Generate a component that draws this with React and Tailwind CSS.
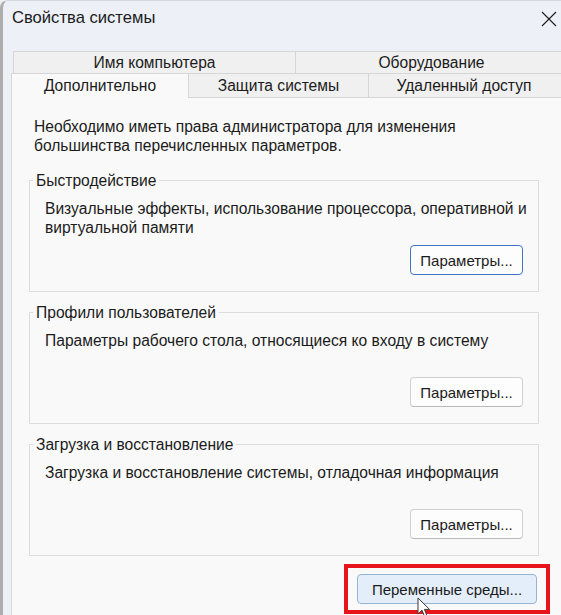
import React from "react";

const groups = [
  {
    title: "Быстродействие",
    text: "Визуальные эффекты, использование процессора, оперативной и виртуальной памяти",
    focused: true,
  },
  {
    title: "Профили пользователей",
    text: "Параметры рабочего стола, относящиеся ко входу в систему",
  },
  {
    title: "Загрузка и восстановление",
    text: "Загрузка и восстановление системы, отладочная информация",
  },
];

function WinButton({ children, focused, hovered, className = "" }) {
  let look = "border-[#d0d0d0] border-b-[#b9b9b9] bg-[#fdfdfd]";
  if (focused) look = "border-[#3a78c4] bg-[#fdfdfd]";
  if (hovered) look = "border-[#95b4d3] bg-[#e3eefa]";
  return (
    <button
      type="button"
      className={`h-[30px] rounded-[4px] border text-[15px] leading-none text-[#1b1b1b] ${look} ${className}`}
    >
      {children}
    </button>
  );
}

function Group({ title, text, focused, className = "" }) {
  return (
    <fieldset
      className={`w-[510px] border border-[#dcdcdc] px-[15px] pt-[9px] pb-[16px] ${className}`}
    >
      <legend className="-ml-[12px] px-[3px] leading-[19px]">{title}</legend>
      <p className="-mr-[10px] h-[38px] leading-[19px]">{text}</p>
      <div className="mt-[8px] flex justify-end">
        <WinButton focused={focused} className="w-[113px]">
          Параметры...
        </WinButton>
      </div>
    </fieldset>
  );
}

export default function App() {
  return (
    <div className="relative h-[615px] w-[561px] overflow-hidden bg-[#f0f0f0] font-['Liberation_Sans','Noto_Sans',sans-serif] text-[15.6px] text-[#1b1b1b]">
      <div className="flex h-full flex-col rounded-tl-[8px] border-t border-l-[3px] border-t-[#d5d9df] border-l-[#adadad] bg-[#edf1f7]">
        {/* заголовок окна */}
        <div className="flex h-[35px] shrink-0 items-center justify-between pl-[9px] pr-[4px]">
          <span className="text-[16.6px]">Свойства системы</span>
          <svg width="16" height="16" viewBox="0 0 16 16" className="text-[#1a1a1a]">
            <path d="M1 1 L15 15 M15 1 L1 15" stroke="currentColor" strokeWidth="1.1" fill="none" />
          </svg>
        </div>

        <div className="flex w-[600px] flex-1 flex-col pl-[8px] pt-[15px]">
          {/* вкладки */}
          <div className="ml-[2px] flex h-[22px]">
            <div className="flex w-[282px] items-center justify-center border-t border-l border-[#d6d6d6] bg-[#f0f0f0]">
              Имя компьютера
            </div>
            <div className="flex flex-1 items-center justify-center border-t border-l border-[#d6d6d6] bg-[#f0f0f0] pr-[36px]">
              Оборудование
            </div>
          </div>
          <div className="flex h-[24px] items-start">
            <div className="relative z-10 flex h-[25px] w-[177px] items-center justify-center border-t border-l border-[#d6d6d6] bg-[#f9f9f9] pb-px">
              Дополнительно
            </div>
            <div className="flex h-[24px] w-[180px] items-center justify-center border-t border-l border-[#d6d6d6] bg-[#f0f0f0]">
              Защита системы
            </div>
            <div className="flex h-[24px] flex-1 items-center justify-center border-t border-l border-[#d6d6d6] bg-[#f0f0f0] pr-[44px]">
              Удаленный доступ
            </div>
          </div>

          {/* содержимое вкладки */}
          <div className="flex-1 border-t border-l border-[#d6d6d6] bg-[#f9f9f9] pt-[19px] pl-[17px]">
            <p className="w-[480px] pl-[5px] leading-[19px]">
              Необходимо иметь права администратора для изменения большинства перечисленных параметров.
            </p>
            <Group {...groups[0]} className="mt-[16px]" />
            <Group {...groups[1]} className="mt-[11px]" />
            <Group {...groups[2]} className="mt-[11px]" />
            <div className="mt-[8px] flex w-[510px] justify-end">
              <div className="-mr-[11px] border-4 border-[#e8141c] px-[9px] pt-[6px] pb-[6px]">
                <WinButton hovered className="w-[180px]">
                  Переменные среды...
                </WinButton>
              </div>
            </div>
          </div>
        </div>
      </div>

      {/* курсор мыши */}
      <svg
        width="14"
        height="22"
        viewBox="0 0 14 22"
        className="absolute left-[417px] top-[597px]"
      >
        <path
          d="M1 1 L1 17 L5 13.2 L7.6 19.6 L10 18.6 L7.4 12.4 L12.6 12.4 Z"
          fill="#ffffff"
          stroke="#3a3a3a"
          strokeWidth="1"
          strokeLinejoin="round"
        />
      </svg>
    </div>
  );
}
